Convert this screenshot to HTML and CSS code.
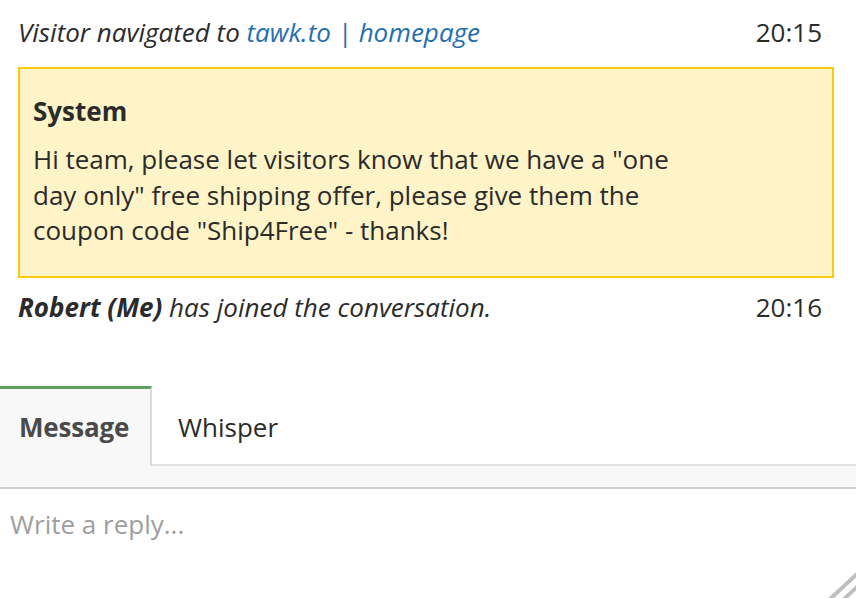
FILE: index.html
```html
<!DOCTYPE html>
<html>
<head>
<meta charset="utf-8">
<link rel="stylesheet" href="styles.css">
</head>
<body>
<div class="chat">
  <div class="event">
    <span class="event-text">Visitor navigated to <span class="link">tawk.to | homepage</span></span>
    <span class="time">20:15</span>
  </div>
  <div class="system">
    <div class="system-title">System</div>
    <div class="system-body">Hi team, please let visitors know that we have a "one day only" free shipping offer, please give them the coupon code "Ship4Free" - thanks!</div>
  </div>
  <div class="event joined">
    <span class="event-text"><b>Robert (Me)</b> has joined the conversation.</span>
    <span class="time">20:16</span>
  </div>
</div>
<div class="composer">
  <div class="tabs">
    <div class="tab active">Message</div>
    <div class="tab">Whisper</div>
    <div class="tab-fill"></div>
  </div>
  <div class="band"></div>
  <div class="reply">
    <span class="placeholder">Write a reply...</span>
    <svg class="grip" width="30" height="30" viewBox="0 0 30 30">
      <line x1="32" y1="5" x2="3" y2="32" stroke="#a8a8a8" stroke-width="4" stroke-opacity="0.75"/>
      <line x1="32" y1="18" x2="17" y2="32" stroke="#a8a8a8" stroke-width="4" stroke-opacity="0.75"/>
    </svg>
  </div>
</div>
</body>
</html>
```
FILE: styles.css
```css
* { box-sizing: border-box; }
html, body { margin: 0; padding: 0; background: #fff; }
body {
  width: 856px;
  height: 598px;
  overflow: hidden;
  font-family: "Open Sans", "Liberation Sans", sans-serif;
  font-size: 26px;
  color: #2b2b2b;
}
.chat {
  padding: 14px 22px 0 18px;
  height: 386px;
}
.event {
  display: flex;
  justify-content: space-between;
  align-items: center;
  line-height: 36px;
  padding-right: 12px;
}
.event-text { font-style: italic; }
.event-text b { font-weight: 700; }
.link { color: #1f6fb0; }
.system {
  margin-top: 17px;
  background: #fef4c8;
  border: 2px solid #f9cb0c;
  padding: 24px 13px 27px 13px;
}
.system-title { font-weight: 700; line-height: 36px; }
.system-body {
  margin-top: 13px;
  line-height: 35.5px;
  width: 660px;
}
.joined { margin-top: 11px; }
.composer { height: 212px; }
.tabs {
  display: flex;
  height: 80px;
}
.tab {
  line-height: 76px;
  border-bottom: 2px solid #e2e2e2;
}
.tab.active {
  width: 152px;
  background: #f8f8f8;
  border-top: 3px solid #5f9f5f;
  border-right: 2px solid #dcdcdc;
  border-bottom: none;
  font-weight: 700;
  color: #4a4a4a;
  padding-left: 19px;
  letter-spacing: -0.2px;
}
.tab:not(.active) { padding-top: 3px; padding-left: 26px; padding-right: 20px; }
.tab-fill { flex: 1; border-bottom: 2px solid #e2e2e2; }
.band {
  height: 23px;
  background: #f8f8f8;
  border-bottom: 2px solid #cfcfcf;
}
.reply {
  position: relative;
  height: 109px;
  padding: 17px 10px;
}
.placeholder { color: #9e9e9e; line-height: 36px; }
.grip { position: absolute; right: 0; bottom: 0; }
```
